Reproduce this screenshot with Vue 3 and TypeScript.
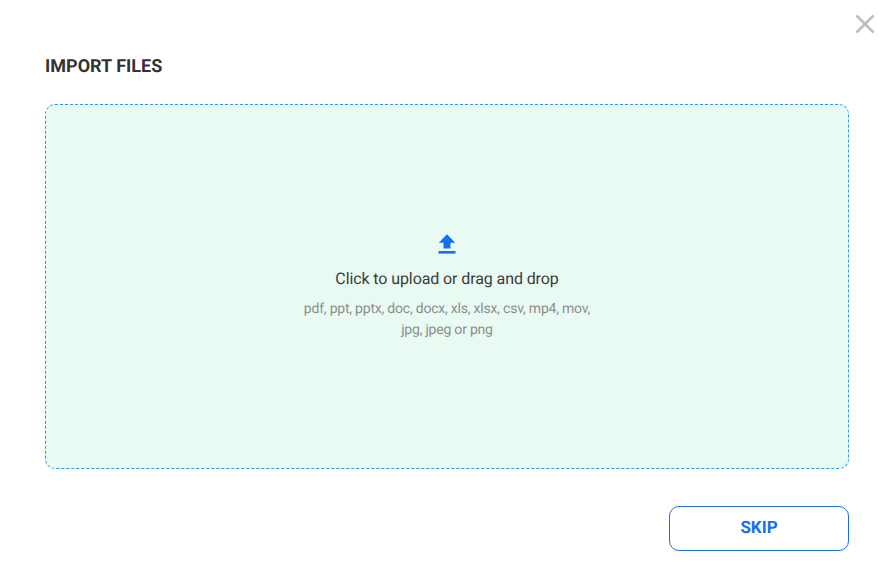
<script setup lang="ts">
const formats = ['pdf, ppt, pptx, doc, docx, xls, xlsx, csv, mp4, mov,', 'jpg, jpeg or png'];
</script>

<template>
  <div class="modal">
    <button class="close" aria-label="Close">
      <svg width="20" height="20" viewBox="0 0 20 20">
        <path d="M1.5 1.5 L18.5 18.5 M18.5 1.5 L1.5 18.5" stroke="#bdbdbd" stroke-width="2.6" fill="none" />
      </svg>
    </button>
    <h1 class="title">IMPORT FILES</h1>
    <div class="drop">
      <svg class="upload" width="18" height="20" viewBox="0 0 18 20">
        <path d="M5.5 14.5 V8.7 H0.8 L9 0.3 L17.2 8.7 H12.5 V14.5 Z" fill="#1470f5" />
        <rect x="0.5" y="17" width="17" height="2.6" fill="#1470f5" />
      </svg>
      <div class="main">Click to upload or drag and drop</div>
      <div class="formats">
        <div v-for="line in formats" :key="line">{{ line }}</div>
      </div>
    </div>
    <div class="actions">
      <button class="skip">SKIP</button>
    </div>
  </div>
</template>

<style>
html, body { margin: 0; background: #fff; }
</style>

<style scoped>
.modal {
  position: relative;
  width: 891px;
  height: 587px;
  box-sizing: border-box;
  padding: 56px 42px 0 45px;
  font-family: Roboto, sans-serif;
  text-rendering: geometricPrecision;
  display: flex;
  flex-direction: column;
}
.close {
  position: absolute;
  top: 14px;
  right: 16px;
  padding: 0;
  border: 0;
  background: none;
  display: flex;
}
.title {
  margin: 0;
  font-size: 18px;
  line-height: 21px;
  font-weight: 700;
  color: #333;
}
.drop {
  margin-top: 27px;
  height: 365px;
  box-sizing: border-box;
  border: 1px dashed #2e97f5;
  border-radius: 10px;
  background: #e8faf1;
  display: flex;
  flex-direction: column;
  align-items: center;
  padding-top: 129px;
}
.upload { display: block; }
.main {
  margin-top: 15px;
  font-size: 16px;
  line-height: 19px;
  color: #3a3a3a;
  letter-spacing: -0.1px;
}
.formats {
  margin-top: 11px;
  font-size: 14px;
  line-height: 21px;
  color: #8e8e8e;
  text-align: center;
  letter-spacing: -0.21px;
}
.actions {
  margin-top: 37px;
  display: flex;
  justify-content: flex-end;
}
.skip {
  width: 180px;
  height: 45px;
  box-sizing: border-box;
  border: 1px solid #1a6fe8;
  border-radius: 10px;
  background: #fff;
  color: #1470f0;
  font-family: Roboto, sans-serif;
  font-size: 17px;
  font-weight: 700;
  padding: 0 0 2px;
  text-rendering: geometricPrecision;
}
</style>
